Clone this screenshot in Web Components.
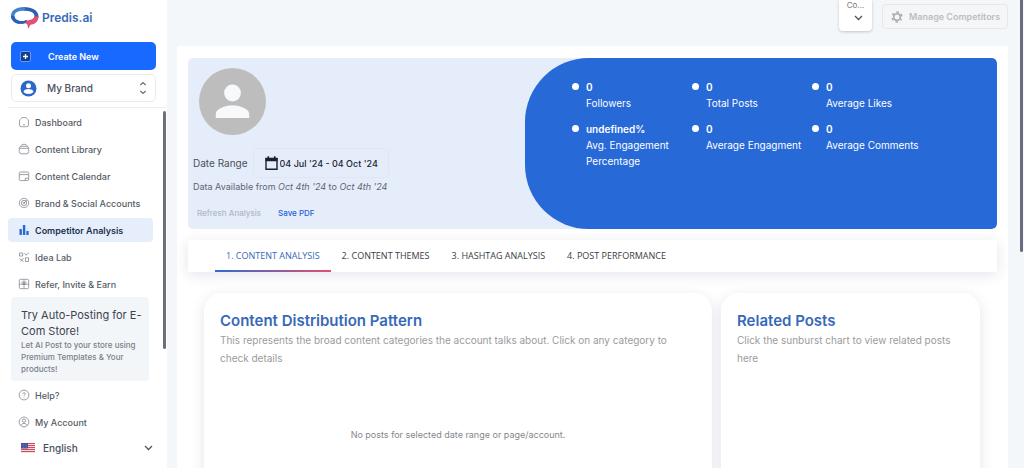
<!DOCTYPE html>
<html lang="en">
<head>
<meta charset="utf-8">
<meta name="viewport" content="width=device-width, initial-scale=1">
<title>Predis.ai – Competitor Analysis</title>
<style>
  :root {
    --brand: #2769d6;
    --ink: #4a4f5a;
    --muted: #9b9b9b;
  }
  body {
    margin: 0;
    font-family: Inter, "Liberation Sans", sans-serif;
    color: var(--ink);
    background: #f4f7fa;
  }
</style>
</head>
<body>
<predis-app></predis-app>

<script>
const define = (name, html, setup) => {
  const template = document.createElement('template');
  template.innerHTML = '<style>*{box-sizing:border-box}button,input,select{font-family:inherit}svg{display:block;flex:none}</style>' + html;
  customElements.define(name, class extends HTMLElement {
    constructor() {
      super();
      this.attachShadow({ mode: 'open' }).append(template.content.cloneNode(true));
    }
    connectedCallback() {
      if (setup) setup(this, this.shadowRoot);
    }
  });
};

const icons = {
  home: '<path d="M1.500 5.200C1.500 3 4 1.300 6 1.300s4.500 1.700 4.500 3.900v3.600a1.900 1.900 0 0 1-1.900 1.900H3.400a1.900 1.900 0 0 1-1.900-1.900z"/><path d="M5 8.700h2"/>',
  library: '<rect x="1.300" y="3.300" width="9.400" height="7.500" rx="2.200"/><path d="M2.800 3.300c0-2.700 6.400-2.700 6.400 0M1.500 5.300h9"/>',
  calendar: '<path d="M10.700 7V3.400a1.400 1.400 0 0 0-1.400-1.400H2.700a1.400 1.400 0 0 0-1.400 1.400v5.800a1.400 1.400 0 0 0 1.400 1.400h6.600a1.400 1.400 0 0 0 1.400-1.400V7M1.300 4.600h9.400M7.300 10.500V8.300h3.300"/>',
  target: '<circle cx="6" cy="6" r="4.700"/><circle cx="6" cy="6" r="2.700"/><circle cx="6" cy="6" r=".8"/><path d="m6 6 3-3"/>',
  chart: '<g fill="#2769d6" stroke="none"><rect x="1.500" y="5" width="2.400" height="6" rx=".4"/><rect x="4.900" y="1" width="2.400" height="10" rx=".4"/><rect x="8.300" y="7" width="2.400" height="4" rx=".4"/></g>',
  idea: '<path d="M1.500 2h3.200v3H1.500zM7.500 6.800h3v3.700h-3zM6.500 2.200l1.500 2 3-2.500M1.500 7.500l4 3M5.500 7l-3 3.500"/>',
  gift: '<rect x="1.300" y="1.300" width="9.400" height="9.400" rx="1.500"/><path d="M1.300 6.300h9.400M6 1.300v9.400"/><path d="M6 6.300c-2.500-.2-2.700-2.600-1.400-2.600S6 6.300 6 6.300s.2-2.600 1.400-2.600S8.500 6.100 6 6.300z"/>',
  help: '<circle cx="6" cy="6" r="4.900"/><path d="M4.700 4.900c.1-1.700 2.700-1.500 2.600 0C7.200 5.800 6 5.800 6 6.900M6 8.100v.7"/>',
  account: '<circle cx="6" cy="6" r="4.900"/><circle cx="6" cy="4.700" r="1.700"/><path d="M2.900 9.700c.3-3 5.900-3 6.200 0"/>'
};

define('nav-item', `
  <style>
    :host { display: block; }
    a {
      display: flex; align-items: center; gap: 5px; height: 24px; padding: 0 10px;
      border-radius: 4px; color: #565b65; text-decoration: none;
      font-size: 9px; font-weight: 500; white-space: nowrap;
    }
    :host([active]) a { background: #e6eefb; color: #22324f; font-weight: 600; }
    svg { fill: none; stroke: #858891; stroke-width: .8; }
  </style>
  <a href="#"><svg width="12" height="12" viewBox="0 0 12 12" aria-hidden="true"></svg><slot></slot></a>
`, (el, root) => {
  root.querySelector('svg').innerHTML = icons[el.getAttribute('icon')];
  if (el.hasAttribute('active')) root.querySelector('a').setAttribute('aria-current', 'page');
});

define('brand-logo', `
  <style>
    :host { display: block; }
    a { display: flex; align-items: center; gap: 3px; text-decoration: none; color: #3769b8; font-size: 12px; font-weight: 600; line-height: 24px; }
  </style>
  <a href="#">
    <svg width="28" height="24" viewBox="0 0 28 24" aria-hidden="true">
      <path fill="#2c5fb5" d="M13 1c8 0 14.500 3.500 14.500 9.300 0 1.700-.6 3.200-1.500 4.500L22.300 13c.8-.9 1.200-1.900 1.200-3 0-3.300-4.400-5.200-10.500-5.200z"/>
      <path fill="#3f83d2" d="M14 1C5.500.6 0 4.500 0 9.700c0 4.600 4 8.100 9.500 8.100 3 0 5.500-.6 7.500-2l-1.700-1.900c-1.500.9-3.300 1.300-5.300 1.200-4-.2-6.600-2.400-6.600-5.300C3.400 6.600 7.500 4.600 14 4.800z"/>
      <path fill="#2c5fb5" d="M0 9.700c0 4.600 4 8.100 9.500 8.100 3 0 5.500-.6 7.500-2l-1.700-1.900c-1.500.9-3.300 1.300-5.300 1.200-4-.2-6.600-2.400-6.600-5.300z"/>
      <path fill="#e0526f" d="M23.500 10.500c-.7 2.100-2.400 3-4.500 3.300-2.300.4-4 1.400-4.800 3.100l2.100 1.600.9 4.300 2.300-4.100c4.300-.4 7.800-2.700 8-8.200z"/>
    </svg>
    <span>Predis.ai</span>
  </a>
`);

define('promo-card', `
  <style>
    :host { display: block; padding: 10px 4px 6px 10px; background: #f3f6f9; border-radius: 4px; }
    h2 { margin: 0; font-size: 11px; line-height: 16px; font-weight: 400; color: #3b4250; }
    p { margin: 0; font-size: 8px; line-height: 12px; font-weight: 500; color: #7b8089; }
  </style>
  <h2><slot name="title"></slot></h2>
  <p><slot></slot></p>
`);

define('side-bar', `
  <style>
    :host { display: flex; flex-direction: column; width: 167px; flex: none; background: #fff; overflow: hidden; }
    .top { padding: 6px 11px 5px; }
    .create {
      display: flex; align-items: center; width: 100%; height: 28px; margin-top: 12px; padding: 0 9px; gap: 17px;
      border: 0; border-radius: 5px; background: #1769ff; color: #fff; font-size: 9px; font-weight: 600;
    }
    .brand {
      display: flex; align-items: center; width: 100%; height: 28px; margin-top: 4px; padding: 0 8px; gap: 10px;
      border: 1px solid #e9eaec; border-radius: 5px; background: #fff; color: var(--ink); font-size: 10px; font-weight: 500;
    }
    .brand span { flex: 1; text-align: left; }
    .scroll { display: flex; justify-content: space-between; margin: 0 1px 0 8px; border-top: 1px solid #eceef0; padding-top: 2px; }
    nav { display: grid; gap: 3px; flex: 1; max-width: 145px; align-content: start; }
    promo-card { margin: -2px 4px -1px 3px; }
    .thumb { width: 3px; height: 238px; margin-top: 1px; background: #6c7077; border-radius: 2px; }
    .lang { display: flex; align-items: center; gap: 8px; margin: 3px 14px 0 21px; color: var(--ink); }
    select { appearance: none; flex: 1; border: 0; background: none; padding: 0; height: 22px; color: inherit; font-size: 10px; font-weight: 500; }
  </style>
  <div class="top">
    <brand-logo></brand-logo>
    <button class="create">
      <svg width="11" height="11" viewBox="0 0 11 11" aria-hidden="true"><rect x=".5" y=".5" width="10" height="10" rx="1.500" fill="#123e8f" stroke="#8db7ff" stroke-width=".7"/><path d="M5.500 3v5M3 5.500h5" stroke="#fff" stroke-width="1.300"/></svg>
      <span>Create New</span>
    </button>
    <button class="brand">
      <svg width="17" height="17" viewBox="0 0 17 17" aria-hidden="true"><circle cx="8.500" cy="8.500" r="8" fill="#2b69c9"/><circle cx="8.500" cy="5.800" r="2.500" fill="#fff"/><path d="M3.500 12c0-4 10-4 10 0-2 2.600-8 2.600-10 0z" fill="#fff"/></svg>
      <span>My Brand</span>
      <svg width="8" height="14" viewBox="0 0 8 14" fill="none" stroke="#666" stroke-width="1.200" aria-hidden="true"><path d="m1.300 4.200 2.700-2.700 2.700 2.700M1.300 9.800 4 12.500l2.700-2.700"/></svg>
    </button>
  </div>
  <div class="scroll">
    <nav aria-label="Main">
      <nav-item icon="home">Dashboard</nav-item>
      <nav-item icon="library">Content Library</nav-item>
      <nav-item icon="calendar">Content Calendar</nav-item>
      <nav-item icon="target">Brand &amp; Social Accounts</nav-item>
      <nav-item icon="chart" active>Competitor Analysis</nav-item>
      <nav-item icon="idea">Idea Lab</nav-item>
      <nav-item icon="gift">Refer, Invite &amp; Earn</nav-item>
      <promo-card><span slot="title">Try Auto-Posting for E-Com Store!</span>Let AI Post to your store using Premium Templates &amp; Your products!</promo-card>
      <nav-item icon="help">Help?</nav-item>
      <nav-item icon="account">My Account</nav-item>
    </nav>
    <div class="thumb"></div>
  </div>
  <div class="lang">
    <svg width="14" height="10" viewBox="0 0 14 10" aria-hidden="true"><path fill="#f6dfe2" d="M0 0h14v10H0z"/><path stroke="#d0485a" stroke-width="1" d="M0 .5h14M0 2.500h14M0 4.500h14M0 6.500h14M0 8.500h14"/><path fill="#3f4a94" d="M0 0h7v5.500H0z"/><path stroke="#a9afd6" stroke-width=".6" stroke-dasharray=".7 .8" d="M.7 1.300h6M.7 2.800h6M.7 4.300h6"/></svg>
    <select aria-label="Language"><option>English</option></select>
    <svg width="9" height="6" viewBox="0 0 9 6" fill="none" stroke="#555" stroke-width="1.300" aria-hidden="true"><path d="m1 1 3.500 3.500L8 1"/></svg>
  </div>
`);

define('top-bar', `
  <style>
    :host { display: flex; justify-content: flex-end; align-items: flex-start; gap: 10px; height: 46px; padding-right: 12px; }
    .picker { position: relative; display: flex; flex-direction: column; align-items: center; width: 33px; height: 31px; padding: 0 6px; background: #fff; border-radius: 0 0 4px 4px; box-shadow: 0 1px 3px #0003; }
    label { font-size: 8px; line-height: 10px; color: #777; }
    .picker select { appearance: none; position: absolute; inset: 0; width: 100%; border: 0; background: none; }
    .picker svg { margin-top: 5px; margin-left: 6px; }
    button {
      display: flex; align-items: center; gap: 6px; height: 25px; margin-top: 4px; padding: 0 10px 0 8px; width: 126px; white-space: nowrap;
      border: 1px solid #e6e8eb; border-radius: 4px; background: #f4f6f8; color: #bcbec2; font-size: 9px; font-weight: 600;
    }
  </style>
  <div class="picker">
    <label for="competitor">Co...</label>
    <svg width="9" height="6" viewBox="0 0 9 6" fill="none" stroke="#555" stroke-width="1.300" aria-hidden="true"><path d="m1 1 3.500 3.500L8 1"/></svg>
    <select id="competitor"></select>
  </div>
  <button disabled>
    <svg width="12" height="12" viewBox="0 0 12 12" fill="none" stroke="#a9abaf" aria-hidden="true"><circle cx="6" cy="6" r="3.300" stroke-width="1.600"/><circle cx="6" cy="6" r="4.900" stroke-width="1.500" stroke-dasharray="2.400 2.730" stroke-dashoffset="1.200" transform="rotate(30 6 6)"/></svg>
    Manage Competitors
  </button>
`);

define('stat-item', `
  <style>
    :host { display: grid; grid-template-columns: 7px 1fr; column-gap: 7px; font-size: 10px; line-height: 16px; font-weight: 400; }
    i { width: 7px; height: 7px; margin-top: 4px; border-radius: 50%; background: #fff; }
    strong { display: block; font-weight: 600; }
  </style>
  <i></i><div><strong><slot name="value"></slot></strong><slot></slot></div>
`);

define('profile-hero', `
  <style>
    :host { display: grid; grid-template-columns: 337fr 472fr; min-height: 171px; border-radius: 5px; overflow: hidden; background: #e5edfb; }
    .info { padding: 10px 0 0 5px; min-width: 0; }
    .avatar { margin-left: 6px; }
    .range { display: flex; align-items: center; gap: 5px; height: 30px; margin-top: 13px; font-size: 10px; white-space: nowrap; }
    .field { display: flex; align-items: center; gap: 2px; width: 136px; height: 30px; padding-left: 11px; border: 1px solid #e1e6f5; border-radius: 4px; }
    input { width: 108px; padding: 0; border: 0; background: none; color: #22262e; font-size: 9px; font-weight: 500; outline: 0; }
    p { margin: 1px 0 0; font-size: 9px; line-height: 16px; color: #60656f; }
    .actions { display: flex; gap: 17px; margin-top: 12px; padding-left: 4px; }
    .actions button { padding: 0; border: 0; background: none; font-size: 8px; line-height: 12px; font-weight: 500; color: #1f63d8; }
    .actions button:disabled { color: #b2b8c6; }
    .stats {
      display: grid; grid-template-columns: repeat(3, 120px); align-content: start; row-gap: 10px;
      padding: 21px 20px 21px 47px; background: var(--brand); color: #fff; border-radius: 64px 5px 5px 64px;
    }
  </style>
  <div class="info">
    <svg class="avatar" width="67" height="67" viewBox="0 0 67 67" role="img" aria-label="Profile"><circle cx="33.500" cy="33.500" r="33.500" fill="#bdbdbd"/><circle cx="33.500" cy="25" r="8.400" fill="#f8f9fb"/><path d="M16.800 50v-4.200c0-5.600 11.200-8.600 16.700-8.600s16.700 3 16.700 8.600V50z" fill="#f8f9fb"/></svg>
    <div class="range">
      <label for="range">Date Range</label>
      <div class="field">
        <svg width="13" height="14" viewBox="0 0 13 14" aria-hidden="true"><path d="M1 2.500h11v10.700H1z" fill="none" stroke="#1c2029" stroke-width="1.400"/><path d="M.5 2h12v3.200H.5zM2.500.3h1.600V2H2.500zM8.900.3h1.600V2H8.900z" fill="#1c2029"/></svg>
        <input id="range" value="04 Jul '24 - 04 Oct '24" readonly>
      </div>
    </div>
    <p>Data Available from <em>Oct 4th '24</em> to <em>Oct 4th '24</em></p>
    <div class="actions"><button disabled>Refresh Analysis</button><button>Save PDF</button></div>
  </div>
  <div class="stats">
    <stat-item><span slot="value">0</span>Followers</stat-item>
    <stat-item><span slot="value">0</span>Total Posts</stat-item>
    <stat-item><span slot="value">0</span>Average Likes</stat-item>
    <stat-item><span slot="value">undefined%</span>Avg. Engagement Percentage</stat-item>
    <stat-item><span slot="value">0</span>Average Engagment</stat-item>
    <stat-item><span slot="value">0</span>Average Comments</stat-item>
  </div>
`);

define('tab-bar', `
  <style>
    :host { display: flex; height: 32px; padding-left: 27px; background: #fff; box-shadow: 0 3px 14px #2828641f; font-family: "Open Sans", sans-serif; }
    button { padding: 0 11px; border: 0; border-bottom: 2px solid transparent; background: none; color: #3b3d42; font-size: 9px; font-weight: 500; white-space: nowrap; }
    button[aria-selected=true] { color: #3769b8; border-image: linear-gradient(90deg, #2f6bd0, #e2506e) 1; }
  </style>
  <button role="tab" aria-selected="true">1. CONTENT ANALYSIS</button>
  <button role="tab" aria-selected="false">2. CONTENT THEMES</button>
  <button role="tab" aria-selected="false">3. HASHTAG ANALYSIS</button>
  <button role="tab" aria-selected="false">4. POST PERFORMANCE</button>
`, (el) => el.setAttribute('role', 'tablist'));

define('content-card', `
  <style>
    :host { display: block; min-width: 0; padding: 18px 16px; background: #fff; border-radius: 18px; box-shadow: 0 3px 14px #2828641f; }
    h2 { margin: 0; font-size: 15px; line-height: 20px; font-weight: 600; color: #3769b8; }
    p { margin: 0; font-size: 10px; line-height: 18px; color: var(--muted); }
    ::slotted(output) { display: block; margin-top: 62px; text-align: center; font-size: 9px; line-height: 12px; color: #85878b; }
  </style>
  <h2><slot name="title"></slot></h2>
  <p><slot name="hint"></slot></p>
  <slot></slot>
`);

define('predis-app', `
  <style>
    :host { display: flex; height: 100vh; overflow: hidden; }
    main { flex: 1; min-width: 0; padding-left: 10px; }
    .panel { margin-right: 12px; padding: 12px 11px 0; background: #fff; min-height: 100vh; }
    tab-bar { margin-top: 11px; }
    .cards { display: grid; grid-template-columns: 508fr 259fr; gap: 9px; min-height: 300px; margin: 21px 17px 0 16px; }
    .thumb { width: 3px; height: 252px; margin-right: 1px; background: #6a6b80; border-radius: 0 0 2px 2px; }
  </style>
  <side-bar></side-bar>
  <main>
    <top-bar></top-bar>
    <div class="panel">
      <profile-hero></profile-hero>
      <tab-bar></tab-bar>
      <div class="cards">
        <content-card>
          <span slot="title">Content Distribution Pattern</span>
          <span slot="hint">This represents the broad content categories the account talks about. Click on any category to check details</span>
          <output>No posts for selected date range or page/account.</output>
        </content-card>
        <content-card>
          <span slot="title">Related Posts</span>
          <span slot="hint">Click the sunburst chart to view related posts here</span>
        </content-card>
      </div>
    </div>
  </main>
  <div class="thumb"></div>
`);
</script>
</body>
</html>
